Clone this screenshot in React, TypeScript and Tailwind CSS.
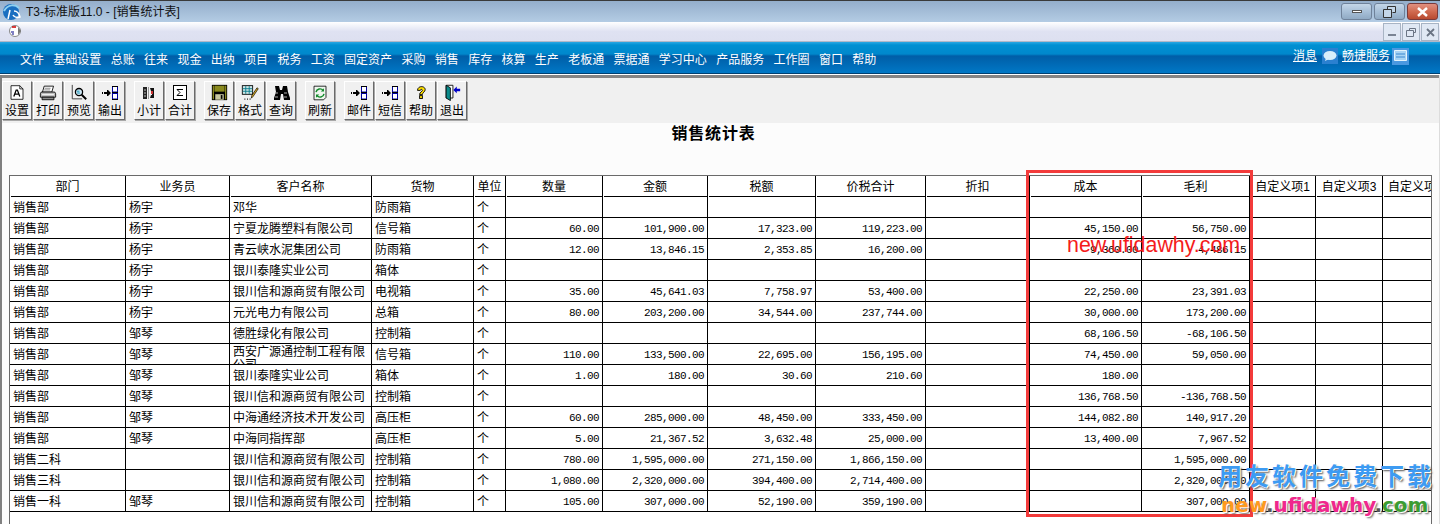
const menus = ["文件", "基础设置", "总账", "往来", "现金", "出纳", "项目", "税务", "工资", "固定资产", "采购", "销售", "库存", "核算", "生产", "老板通", "票据通", "学习中心", "产品服务", "工作圈", "窗口", "帮助"];

const colsClass = "grid grid-cols-[116px_104px_142px_102px_32px_97px_105px_108px_110px_104px_112px_108px_66px_67px_80px]";

const headers = ["部门", "业务员", "客户名称", "货物", "单位", "数量", "金额", "税额", "价税合计", "折扣", "成本", "毛利", "自定义项1", "自定义项3", "自定义项"];

const xinhe = "银川信和源商贸有限公司";

// dept, person, customer, goods, qty, amount, tax, total, cost, profit
const rows = [
  ["销售部", "杨宇", "邓华", "防雨箱", "", "", "", "", "", ""],
  ["销售部", "杨宇", "宁夏龙腾塑料有限公司", "信号箱", "60.00", "101,900.00", "17,323.00", "119,223.00", "45,150.00", "56,750.00"],
  ["销售部", "杨宇", "青云峡水泥集团公司", "防雨箱", "12.00", "13,846.15", "2,353.85", "16,200.00", "9,360.00", "4,486.15"],
  ["销售部", "杨宇", "银川泰隆实业公司", "箱体", "", "", "", "", "", ""],
  ["销售部", "杨宇", xinhe, "电视箱", "35.00", "45,641.03", "7,758.97", "53,400.00", "22,250.00", "23,391.03"],
  ["销售部", "杨宇", "元光电力有限公司", "总箱", "80.00", "203,200.00", "34,544.00", "237,744.00", "30,000.00", "173,200.00"],
  ["销售部", "邹琴", "德胜绿化有限公司", "控制箱", "", "", "", "", "68,106.50", "-68,106.50"],
  ["销售部", "邹琴", "西安广源通控制工程有限公司", "信号箱", "110.00", "133,500.00", "22,695.00", "156,195.00", "74,450.00", "59,050.00"],
  ["销售部", "邹琴", "银川泰隆实业公司", "箱体", "1.00", "180.00", "30.60", "210.60", "180.00", ""],
  ["销售部", "邹琴", xinhe, "控制箱", "", "", "", "", "136,768.50", "-136,768.50"],
  ["销售部", "邹琴", "中海通经济技术开发公司", "高压柜", "60.00", "285,000.00", "48,450.00", "333,450.00", "144,082.80", "140,917.20"],
  ["销售部", "邹琴", "中海同指挥部", "高压柜", "5.00", "21,367.52", "3,632.48", "25,000.00", "13,400.00", "7,967.52"],
  ["销售二科", "", xinhe, "控制箱", "780.00", "1,595,000.00", "271,150.00", "1,866,150.00", "", "1,595,000.00"],
  ["销售三科", "", xinhe, "控制箱", "1,080.00", "2,320,000.00", "394,400.00", "2,714,400.00", "", "2,320,000.00"],
  ["销售一科", "邹琴", xinhe, "控制箱", "105.00", "307,000.00", "52,190.00", "359,190.00", "", "307,000.00"],
];

const ArrowBoxes = () => (
  <svg width="16" height="14" viewBox="0 0 16 14">
    <path d="M0 6h1v2h-1zM2 6h3v-2h1l3 3-3 3h-1v-2h-3z" fill="#000" />
    <rect x="10.500" y=".5" width="5" height="5.500" fill="#fff" stroke="#0000a0" />
    <rect x="10.500" y="7.500" width="5" height="5.500" fill="#fff" stroke="#0000a0" />
    <path d="M10 .5h6M10 6.500h6M10 13.500h6" stroke="#000" />
  </svg>
);

const PageA = () => (
  <svg width="16" height="17" viewBox="0 0 20 20">
    <path d="M2.500 1.500h11l4 4v13h-15z" fill="#fff" stroke="#000" />
    <path d="M13.500 1.500v4h4" fill="none" stroke="#000" />
    <path d="M6 15l3-8h1.500l3 8M7 12h5" fill="none" stroke="#000" strokeWidth="1.600" />
  </svg>
);

const Printer = () => (
  <svg width="18" height="17" viewBox="0 0 20 20">
    <path d="M5.500 2.500h11l-2 7h-11z" fill="#fff" stroke="#000" />
    <path d="M6 5h7M5.500 7h7" stroke="#777" />
    <path d="M2 9.500h16l1 2v4h-18v-4z" fill="#bdbdbd" stroke="#000" />
    <path d="M3 15.500h14v3h-14z" fill="#8a8a8a" stroke="#000" />
    <path d="M3 12.500h14" stroke="#fff" />
  </svg>
);

const Preview = () => (
  <svg width="18" height="18" viewBox="0 0 20 20">
    <path d="M2.500 1v15.500h11" fill="none" stroke="#333" />
    <circle cx="10" cy="9" r="4" fill="#cfe8f5" stroke="#000" strokeWidth="1.400" />
    <path d="M7.500 8h3M8 10h3" stroke="#08a" />
    <path d="M13 12l5 5" stroke="#000" strokeWidth="2.200" />
  </svg>
);

const Subtotal = () => (
  <svg width="14" height="14" viewBox="0 0 14 14">
    <rect x="1" y="1" width="4" height="12" fill="#222" />
    <path d="M2 4h2M2 7h2M2 10h2" stroke="#bbb" />
    <rect x="6" y="1" width="1" height="12" fill="#999" />
    <path d="M8 2h4v10h-4l1-3h1v-4h-1z" fill="#111" />
    <rect x="9" y="5" width="2" height="3" fill="#c33" />
  </svg>
);

const Sum = () => (
  <svg width="14" height="15" viewBox="0 0 14 15">
    <rect x=".5" y=".5" width="13" height="14" fill="#fff" stroke="#000" />
    <path d="M10 4.500h-6l3 3-3 3h6" fill="none" stroke="#000" />
  </svg>
);

const Floppy = () => (
  <svg width="17" height="17" viewBox="0 0 20 20">
    <path d="M1 1h18v18h-18z" fill="#000" />
    <rect x="4" y="2" width="12" height="7" fill="#8a8a1e" />
    <rect x="2" y="2" width="1.500" height="16" fill="#8a8a1e" />
    <rect x="16.500" y="2" width="1.500" height="16" fill="#8a8a1e" />
    <rect x="5" y="12" width="10" height="6.500" fill="#c8c8a0" />
    <rect x="11.500" y="13" width="2" height="4.500" fill="#000" />
  </svg>
);

const FormatIcon = () => (
  <svg width="19" height="18" viewBox="0 0 22 20">
    <rect x="1.500" y="1.500" width="12" height="10" fill="#cfe6e6" stroke="#000" />
    <path d="M5.500 2v9M9.500 2v9M2 5h11M2 8h11" stroke="#078" />
    <path d="M20 5l-6 9-2 2 .5-3 6-9z" fill="#e0b020" stroke="#000" strokeWidth=".8" />
    <path d="M4 17h1M7 17h1M10 17h1" stroke="#000" strokeWidth="1.500" />
  </svg>
);

const Binoculars = () => (
  <svg width="18" height="15" viewBox="0 0 18 15">
    <path d="M3 1h4l1 4h2l1-4h4l1 6 2 6v2h-6l-1-6h-2l-1 6h-6v-2l2-6z" fill="#000" />
    <path d="M3 8h3M12 8h3M3 12h3M12 12h3" stroke="#aaa" />
  </svg>
);

const Refresh = () => (
  <svg width="16" height="16" viewBox="0 0 20 20">
    <path d="M2.500 1.500h15v14l-3 3h-12z" fill="#eef6ee" stroke="#000" />
    <path d="M5 9a5 5 0 0 1 9-2M15 11a5 5 0 0 1-9 2" fill="none" stroke="#118a2a" strokeWidth="1.800" />
    <path d="M15 4v4h-4zM5 16v-4h4z" fill="#118a2a" />
  </svg>
);

const HelpIcon = () => (
  <svg width="14" height="15" viewBox="0 0 20 20">
    <path d="M5 7c0-7 11-7 11-1 0 3-4 4-4 7h-4c0-4 4-4 4-6 0-2-3-2-3 0z" fill="#ffe000" stroke="#000" strokeWidth="1.300" />
    <rect x="8" y="14.500" width="4" height="4" fill="#ffe000" stroke="#000" strokeWidth="1.300" />
  </svg>
);

const ExitIcon = () => (
  <svg width="17" height="17" viewBox="0 0 20 20">
    <path d="M2.500 1.500h8v15h-8z" fill="#fff" stroke="#000" />
    <path d="M2.500 1.500l5 3v15l-5-3z" fill="#0a8a8a" stroke="#000" />
    <path d="M11 7l4-4v2.500h4v3h-4v2.500z" fill="#0000c8" />
  </svg>
);

const tools = [
  [["设置", <PageA />], ["打印", <Printer />], ["预览", <Preview />], ["输出", <ArrowBoxes />]],
  [["小计", <Subtotal />], ["合计", <Sum />]],
  [["保存", <Floppy />], ["格式", <FormatIcon />], ["查询", <Binoculars />]],
  [["刷新", <Refresh />]],
  [["邮件", <ArrowBoxes />], ["短信", <ArrowBoxes />], ["帮助", <HelpIcon />], ["退出", <ExitIcon />]],
] as const;

const CaptionButton = ({ red, children }: { red?: boolean; children: React.ReactNode }) => (
  <div
    className={
      red
        ? "w-[31px] h-[17px] flex items-center justify-center rounded-[3px] border border-[#7a3a3a] bg-gradient-to-b from-[#e09080] via-[#d06a50] to-[#b84a30]"
        : "w-[31px] h-[17px] flex items-center justify-center rounded-[3px] border border-[#6f829a] bg-gradient-to-b from-[#c4d6e8] via-[#a8c0d8] to-[#90aac4]"
    }
  >
    {children}
  </div>
);

const ChildButton = ({ children }: { children: React.ReactNode }) => (
  <div className="w-[18px] h-[18px] flex items-center justify-center border border-[#a8b4c4] bg-[#e0e8f4]">{children}</div>
);

const numCell = "h-[21px] border-r border-b border-black pr-[3px] text-right font-['Liberation_Mono',monospace] text-[11px] tracking-[-0.6px] leading-[22px]";

export default function App() {
  return (
    <div className="relative w-[1440px] h-[524px] overflow-hidden bg-white text-black text-[12px] font-['Liberation_Sans','Noto_Sans_CJK_SC',sans-serif]">
      {/* title bar */}
      <div className="h-[22px] flex items-center justify-between border-t border-[#3a3a3a] bg-gradient-to-b from-[#94aecb] to-[#b4cce4]">
        <div className="flex items-center">
          <svg className="ml-[2px]" width="20" height="18" viewBox="0 0 20 18">
            <circle cx="9" cy="9" r="8" fill="#1a6fc0" />
            <path d="M2 8c4-7 11-7 15-3" fill="none" stroke="#8fd0f0" strokeWidth="2" />
            <path d="M8 7l-2 9M12 8c3 0 5 2 6 6-3 1-6 0-7-2" fill="none" stroke="#fff" strokeWidth="1.500" />
          </svg>
          <span className="ml-[4px] text-[#111]">T3-标准版11.0 - [销售统计表]</span>
        </div>
        <div className="flex gap-[2px] pr-[2px]">
          <CaptionButton>
            <div className="w-[10px] h-[3px] bg-white border border-[#555]" />
          </CaptionButton>
          <CaptionButton>
            <svg width="13" height="12" viewBox="0 0 13 12">
              <path d="M4.500 3.500v-3h8v6h-3M.5 3.500h8v8h-8z" fill="#c4d6e8" stroke="#333" />
            </svg>
          </CaptionButton>
          <CaptionButton red>
            <svg width="13" height="10" viewBox="0 0 13 10">
              <path d="M2 1l9 8M11 1l-9 8" stroke="#fff" strokeWidth="2.500" />
            </svg>
          </CaptionButton>
        </div>
      </div>

      {/* child window strip */}
      <div className="h-[20px] flex justify-between border-b border-[#b0b8c8] bg-gradient-to-b from-white via-[#dfe2f2] to-[#dde0f0]">
        <svg className="ml-[9px] mt-[3px]" width="13" height="12" viewBox="0 0 13 12">
          <circle cx="6" cy="6" r="5.500" fill="#fff" stroke="#888" />
          <path d="M3 2h4" stroke="#c00" strokeWidth="1.500" />
          <path d="M2 7h3M3 9h2" stroke="#008" />
          <path d="M9 2l3 4-3 4z" fill="#777" />
        </svg>
        <div className="flex gap-px pr-px mt-px">
          <ChildButton>
            <div className="w-[8px] h-[2px] bg-[#7a8494] mt-[6px]" />
          </ChildButton>
          <ChildButton>
            <svg width="10" height="9" viewBox="0 0 10 9">
              <path d="M3.500 2.500v-2h6v4h-2M.5 2.500h7v6h-7z" fill="none" stroke="#6a7484" />
            </svg>
          </ChildButton>
          <ChildButton>
            <svg width="9" height="9" viewBox="0 0 9 9">
              <path d="M1 1l7 7M8 1l-7 7" stroke="#6a7484" strokeWidth="1.800" />
            </svg>
          </ChildButton>
        </div>
      </div>

      {/* menu bar */}
      <div className="h-[32px] flex items-center justify-between border-b border-[#003f70] bg-[linear-gradient(#2aa8e4_0,#0090d2_3px,#0088cc_12px,#005ea8_14px,#0062ac_17px,#0078c6_31px)] text-white">
        <div className="flex gap-[9.33px] pl-[20px] pt-[4px]">
          {menus.map((m) => (
            <span key={m}>{m}</span>
          ))}
        </div>
        <div className="flex items-center pb-[3px] pr-[31px]">
          <span className="underline">消息</span>
          <svg className="ml-[5px]" width="16" height="16" viewBox="0 0 16 16">
            <rect width="16" height="16" fill="#2a80d0" />
            <ellipse cx="8" cy="7.500" rx="6.500" ry="4.500" fill="#d8eefa" />
            <path d="M4 10l-1 3 4-2z" fill="#d8eefa" />
          </svg>
          <span className="ml-[4px] underline">畅捷服务</span>
          <svg className="ml-[2px]" width="17" height="17" viewBox="0 0 17 17">
            <rect width="17" height="17" fill="#4a98e0" />
            <path d="M2.500 2.500h12v10h-12z" fill="#a8d4f4" stroke="#e4f4fc" />
            <path d="M4 6h9M4 9h9" stroke="#3a88d0" />
          </svg>
        </div>
      </div>

      {/* toolbar + report */}
      <div className="h-[449px] mt-px border-l-2 border-r border-l-[#808080] border-r-[#dcdcdc] flex flex-col">
        <div className="h-[48px] border-t-[3px] border-[#858585] bg-[#f0f0f0] flex pt-[3px] gap-[9px]">
          {tools.map((group, i) => (
            <div key={i} className="flex gap-px">
              {group.map(([label, icon]) => (
                <div
                  key={label as string}
                  className="w-[30px] h-[39px] flex flex-col items-center border border-t-white border-l-white border-b-[#6a6a6a] border-r-[#6a6a6a] shadow-[1px_1px_0_#a8a8a8]"
                >
                  <div className="h-[21px] flex items-center justify-center">{icon}</div>
                  <span className="mt-px leading-[14px] whitespace-nowrap">{label as string}</span>
                </div>
              ))}
            </div>
          ))}
        </div>

        <div className="flex-1 bg-[#fcfcfc] flex flex-col">
          <div className="h-[52px] text-center pt-px pr-[14px] font-bold text-[16px] tracking-[0.8px] leading-[20px]">销售统计表</div>
          <div className="flex-1 ml-[7px] w-[1423px] border-l border-t border-r border-[#6a6a6a] bg-white overflow-hidden">
            <div className={colsClass}>
              {headers.map((h, i) => (
                <div key={h} className="h-[21px] flex flex-col border-r border-black overflow-hidden">
                  <div className={i === 14 ? "h-[20px] pl-[5px] leading-[22px] whitespace-nowrap" : "h-[20px] text-center leading-[22px] whitespace-nowrap"}>{h}</div>
                  <div className="h-px ml-px bg-black" />
                </div>
              ))}
            </div>
            {rows.map((r, i) => (
              <div key={i} className={colsClass}>
                {r.slice(0, 4).map((c, j) => (
                  <div
                    key={j}
                    className={
                      c.length > 12
                        ? "h-[21px] border-r border-b border-black pl-[3px] overflow-hidden leading-[13px] pt-[2px]"
                        : "h-[21px] border-r border-b border-black pl-[3px] overflow-hidden leading-[23px] whitespace-nowrap"
                    }
                  >
                    {c}
                  </div>
                ))}
                <div className="h-[21px] border-r border-b border-black pl-[3px] leading-[23px] overflow-hidden">个</div>
                {r.slice(4, 8).map((c, j) => (
                  <div key={j} className={numCell}>
                    {c}
                  </div>
                ))}
                <div className="h-[21px] border-r border-b border-black" />
                {r.slice(8, 10).map((c, j) => (
                  <div key={j} className={numCell}>
                    {c}
                  </div>
                ))}
                <div className="h-[21px] border-r border-b border-black" />
                <div className="h-[21px] border-r border-b border-black" />
                <div className="h-[21px] border-b border-black" />
              </div>
            ))}
          </div>
        </div>
      </div>

      {/* annotation box and watermarks lying over the report */}
      <div className="absolute left-[1026px] top-[170px] w-[227px] h-[347px] border-[3px] border-[#f33b3b]" />
      <div className="absolute left-[1067px] top-[233px] text-[21.4px] leading-[24px] text-[#f51c1c] font-['Liberation_Sans',sans-serif] whitespace-nowrap">
        new.ufidawhy.com
      </div>
      <div className="absolute left-[1218px] top-[463px] text-[24px] leading-[28px] tracking-[3px] font-bold text-[#3d9bf2] whitespace-nowrap [text-shadow:1px_1px_0_#fff,2px_2px_2px_#555]">
        用友软件免费下载
      </div>
      <div className="absolute left-[1221px] top-[493px] text-[20px] leading-[24px] font-bold font-['DejaVu_Sans',sans-serif] whitespace-nowrap [text-shadow:1px_1px_0_#fff,2px_2px_2px_#666]">
        <span className="text-[#ff9a1e]">new</span>
        <span className="text-[#555]">.</span>
        <span className="text-[#f0288c]">ufidawhy</span>
        <span className="text-[#555]">.</span>
        <span className="text-[#3c9c32]">com</span>
      </div>
    </div>
  );
}
